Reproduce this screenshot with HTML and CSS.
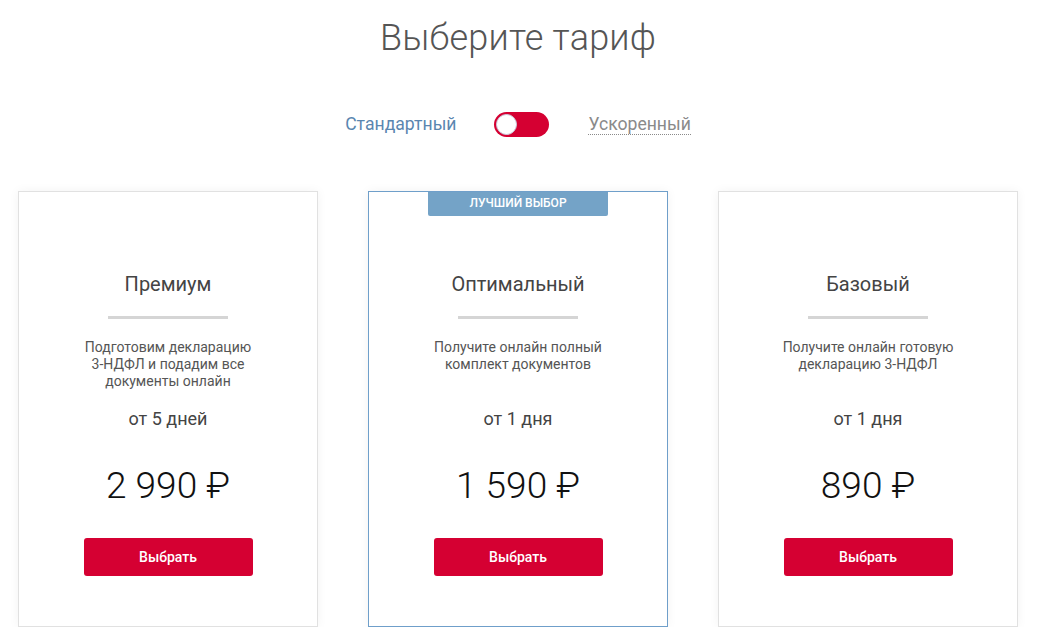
FILE: index.html
```html
<!DOCTYPE html>
<html lang="ru">
<head>
<meta charset="utf-8">
<title>Выберите тариф</title>
<link rel="stylesheet" href="styles.css">
</head>
<body>
<div class="page">
  <h1 class="title">Выберите тариф</h1>
  <div class="switcher">
    <span class="opt opt-active">Стандартный</span>
    <span class="toggle"><span class="knob"></span></span>
    <span class="opt opt-link">Ускоренный</span>
  </div>
  <div class="cards">
    <div class="card">
      <div class="card-title">Премиум</div>
      <div class="divider"></div>
      <div class="desc">Подготовим декларацию<br>3-НДФЛ и подадим все<br>документы онлайн</div>
      <div class="term">от 5 дней</div>
      <div class="price">2 990 ₽</div>
      <button class="btn">Выбрать</button>
    </div>
    <div class="card card-best">
      <div class="badge">Лучший выбор</div>
      <div class="card-title">Оптимальный</div>
      <div class="divider"></div>
      <div class="desc">Получите онлайн полный<br>комплект документов</div>
      <div class="term">от 1 дня</div>
      <div class="price">1 590 ₽</div>
      <button class="btn">Выбрать</button>
    </div>
    <div class="card">
      <div class="card-title">Базовый</div>
      <div class="divider"></div>
      <div class="desc">Получите онлайн готовую<br>декларацию 3-НДФЛ</div>
      <div class="term">от 1 дня</div>
      <div class="price">890 ₽</div>
      <button class="btn">Выбрать</button>
    </div>
  </div>
</div>
</body>
</html>
```
FILE: styles.css
```css
* { box-sizing: border-box; }
html, body { margin: 0; padding: 0; background: #fff; }
body { font-family: Roboto, "Liberation Sans", Arial, sans-serif; color: #444; }
.page { width: 1040px; padding: 16px 22px 0 18px; }
.title {
  margin: 0;
  text-align: center;
  font-weight: 300;
  font-size: 36px;
  line-height: 44px;
  color: #555;
  letter-spacing: 0.2px;
}
.switcher {
  display: flex;
  justify-content: center;
  align-items: center;
  margin-top: 51px;
  height: 26px;
}
.opt { font-size: 17.6px; line-height: 22px; }
.opt-active { color: #5a86b0; }
.opt-link { color: #8a8a8a; border-bottom: 1px dotted #8a8a8a; line-height: 20px; margin-top: 1px; }
.toggle {
  position: relative;
  width: 55px;
  height: 25px;
  border-radius: 13px;
  background: #d50032;
  margin: 0 39px 0 38px;
}
.knob {
  position: absolute;
  left: 2px;
  top: 2px;
  width: 21px;
  height: 21px;
  border-radius: 50%;
  background: #fff;
  border: 1px solid #c9cfe0;
}
.cards {
  display: flex;
  gap: 50px;
  margin-top: 54px;
}
.card {
  position: relative;
  width: 300px;
  height: 436px;
  border: 1px solid #e1e1e1;
  background: #fff;
  box-shadow: 0 0 10px rgba(0,0,0,0.05);
  display: flex;
  flex-direction: column;
  align-items: center;
  padding-top: 80px;
  text-align: center;
}
.card-best { border-color: #6f9fca; }
.badge {
  position: absolute;
  top: 0;
  left: 59px;
  width: 180px;
  height: 24px;
  background: #74a3c7;
  color: #fff;
  font-size: 12px;
  font-weight: 500;
  text-transform: uppercase;
  line-height: 22px;
  border-radius: 0 0 2px 2px;
}
.card-title { font-size: 20px; line-height: 24px; color: #444; }
.divider { width: 120px; height: 3px; background: #d5d5d5; margin-top: 20px; }
.desc {
  margin-top: 20px;
  font-size: 14px;
  line-height: 17px;
  height: 51px;
  color: #555;
}
.term { margin-top: 18px; font-size: 18px; line-height: 22px; color: #444; }
.price { margin-top: 34px; font-size: 37px; line-height: 44px; font-weight: 300; color: #111; }
.btn {
  margin-top: 30px;
  width: 169px;
  height: 38px;
  border: none;
  border-radius: 3px;
  background: #d50032;
  color: #fff;
  font-family: inherit;
  font-size: 14px;
  font-weight: 500;
  cursor: pointer;
}
```
